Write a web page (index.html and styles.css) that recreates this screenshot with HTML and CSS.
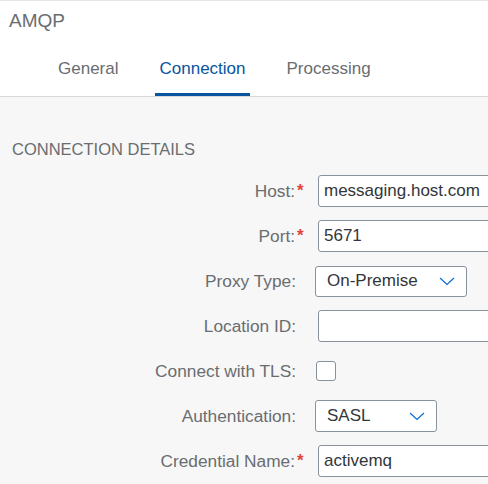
FILE: index.html
```html
<!DOCTYPE html>
<html lang="en">
<head>
<meta charset="utf-8">
<title>AMQP</title>
<link rel="stylesheet" href="styles.css">
</head>
<body>
<div class="page">
  <header class="header">
    <div class="title">AMQP</div>
    <nav class="tabs">
      <div class="tab">General</div>
      <div class="tab tab-active">Connection</div>
      <div class="tab">Processing</div>
    </nav>
  </header>
  <main class="content">
    <h2 class="section-title">CONNECTION DETAILS</h2>
    <div class="form">
      <label class="label">Host:<span class="req">*</span></label>
      <div class="control"><div class="input">messaging.host.com</div></div>

      <label class="label">Port:<span class="req">*</span></label>
      <div class="control"><div class="input">5671</div></div>

      <label class="label label-plain">Proxy Type:</label>
      <div class="control">
        <div class="select select-proxy">
          <span>On-Premise</span>
          <svg class="chev" width="16" height="9" viewBox="0 0 16 9"><path d="M1 1 L8 7.5 L15 1" fill="none" stroke="#0a6ed1" stroke-width="1.2"/></svg>
        </div>
      </div>

      <label class="label label-plain">Location ID:</label>
      <div class="control"><div class="input"></div></div>

      <label class="label label-plain">Connect with TLS:</label>
      <div class="control"><div class="checkbox"></div></div>

      <label class="label label-plain">Authentication:</label>
      <div class="control">
        <div class="select select-auth">
          <span>SASL</span>
          <svg class="chev" width="16" height="9" viewBox="0 0 16 9"><path d="M1 1 L8 7.5 L15 1" fill="none" stroke="#0a6ed1" stroke-width="1.2"/></svg>
        </div>
      </div>

      <label class="label">Credential Name:<span class="req">*</span></label>
      <div class="control"><div class="input">activemq</div></div>
    </div>
  </main>
</div>
</body>
</html>
```

FILE: styles.css
```css
html, body {
  margin: 0;
  padding: 0;
  overflow: hidden;
  width: 488px;
  height: 484px;
}

body {
  font-family: "Liberation Sans", Arial, sans-serif;
  background: #f7f7f7;
}

.page {
  width: 488px;
  height: 484px;
  overflow: hidden;
  background: #f7f7f7;
}

.header {
  background: #ffffff;
  border-top: 1px solid #e6e6e6;
  border-bottom: 1px solid #d9d9d9;
  height: 95px;
  display: flex;
  flex-direction: column;
}

.title {
  padding: 9px 0 0 9px;
  font-size: 19px;
  line-height: 22px;
  color: #6a6d70;
}

.tabs {
  flex: 1;
  display: flex;
  align-items: flex-end;
  gap: 33px;
  padding-left: 54px;
}

.tab {
  font-size: 17px;
  line-height: 20px;
  color: #6a6d70;
  padding: 0 4px 14px 4px;
  border-bottom: 3px solid transparent;
  border-radius: 2px 2px 0 0;
}

.tab-active {
  color: #0854a0;
  border-bottom-color: #0854a0;
}

.content {
  padding: 42px 0 0 12px;
}

.section-title {
  margin: 0;
  font-size: 16.5px;
  line-height: 20px;
  font-weight: normal;
  color: #6a6d70;
}

.form {
  margin-top: 16px;
  margin-left: -12px;
  display: grid;
  grid-template-columns: 305px 1fr;
  column-gap: 10px;
  grid-auto-rows: 32px;
  row-gap: 13px;
}

.label {
  display: flex;
  align-items: center;
  justify-content: flex-end;
  font-size: 17.3px;
  color: #6a6d70;
  white-space: nowrap;
}

.label-plain {
  padding-right: 9px;
}

.req {
  color: #e34040;
  font-weight: bold;
  font-size: 17px;
  margin-left: 2px;
  width: 8px;
  text-align: left;
  margin-top: -1px;
  line-height: 1;
}

.control {
  display: flex;
  align-items: center;
}

.input {
  box-sizing: border-box;
  margin-left: 3px;
  width: 240px;
  height: 32px;
  background: #ffffff;
  border: 1px solid #89919a;
  border-radius: 3px;
  padding: 0 5px;
  font-size: 17px;
  line-height: 30px;
  color: #32363a;
  white-space: nowrap;
}

.select {
  box-sizing: border-box;
  display: flex;
  align-items: center;
  justify-content: space-between;
  height: 32px;
  background: #ffffff;
  border: 1px solid #89919a;
  border-radius: 3px;
  padding: 0 11px 0 11px;
  font-size: 17px;
  color: #32363a;
}

.select-proxy {
  width: 152px;
  height: 31px;
}

.select-auth {
  width: 122px;
}

.chev {
  display: block;
  margin-top: 1px;
}

.checkbox {
  box-sizing: border-box;
  margin-left: 1px;
  width: 20px;
  height: 20px;
  background: #ffffff;
  border: 1px solid #89919a;
  border-radius: 3px;
}
```
